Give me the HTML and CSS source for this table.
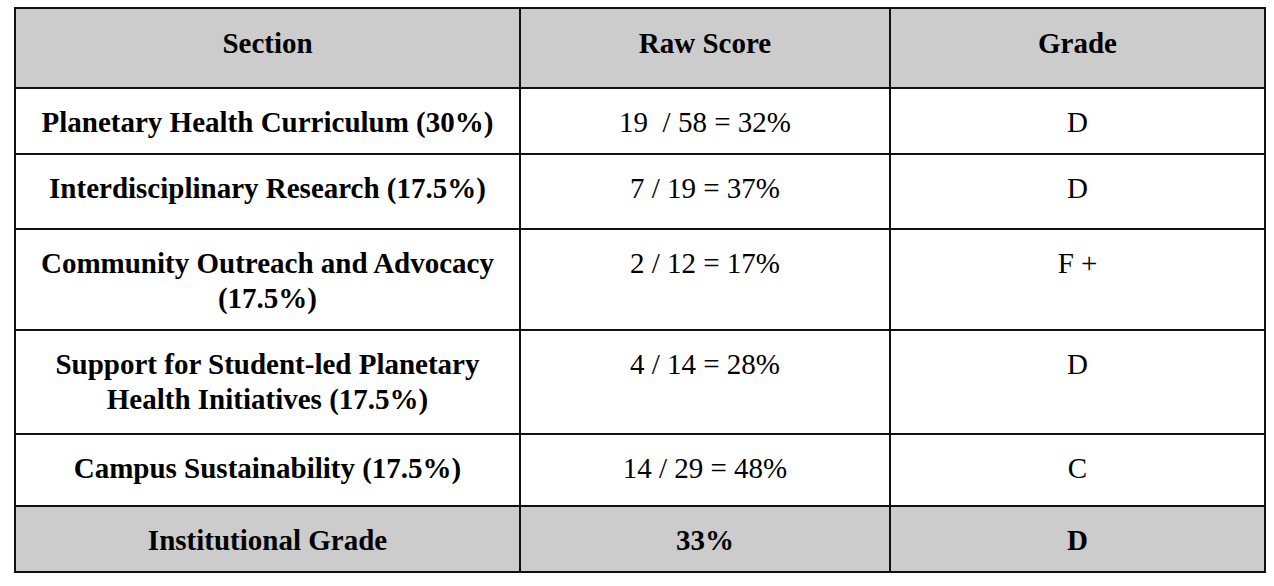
FILE: index.html
```html
<!DOCTYPE html>
<html>
<head>
<meta charset="utf-8">
<link rel="stylesheet" href="styles.css">
</head>
<body>
<table class="grades">
  <colgroup>
    <col class="c1">
    <col class="c2">
    <col class="c3">
  </colgroup>
  <tr class="head h80">
    <th>Section</th>
    <th>Raw Score</th>
    <th>Grade</th>
  </tr>
  <tr class="h66">
    <td class="sec">Planetary Health Curriculum (30%)</td>
    <td>19&nbsp; / 58 = 32%</td>
    <td>D</td>
  </tr>
  <tr class="h75">
    <td class="sec">Interdisciplinary Research (17.5%)</td>
    <td>7 / 19 = 37%</td>
    <td>D</td>
  </tr>
  <tr class="h101">
    <td class="sec">Community Outreach and Advocacy (17.5%)</td>
    <td>2 / 12 = 17%</td>
    <td>F +</td>
  </tr>
  <tr class="h104">
    <td class="sec">Support for Student-led Planetary Health Initiatives (17.5%)</td>
    <td>4 / 14 = 28%</td>
    <td>D</td>
  </tr>
  <tr class="h72">
    <td class="sec">Campus Sustainability (17.5%)</td>
    <td>14 / 29 = 48%</td>
    <td>C</td>
  </tr>
  <tr class="head h66">
    <td>Institutional Grade</td>
    <td>33%</td>
    <td>D</td>
  </tr>
</table>
</body>
</html>
```

FILE: styles.css
```css
html, body {
  margin: 0;
  padding: 0;
  background: #ffffff;
}

body {
  padding: 7px 0 0 14px;
  font-family: "Liberation Serif", "Times New Roman", serif;
  color: #000000;
}

.grades {
  border-collapse: collapse;
  table-layout: fixed;
  width: 1250px;
  font-size: 29px;
  line-height: 35px;
}

.c1 { width: 505px; }
.c2 { width: 370px; }
.c3 { width: 375px; }

.grades th,
.grades td {
  border: 2px solid #111111;
  text-align: center;
  vertical-align: top;
  padding: 16px 16px 0 16px;
  box-sizing: border-box;
}

.grades th {
  font-weight: bold;
}

.grades .sec {
  font-weight: bold;
}

.head th,
.head td {
  background: #cccccc;
  font-weight: bold;
}

.head th {
  padding-top: 17px;
}

.h80 { height: 80px; }
.h66 { height: 66px; }
.h75 { height: 75px; }
.h101 { height: 101px; }
.h104 { height: 104px; }
.h72 { height: 72px; }
```
